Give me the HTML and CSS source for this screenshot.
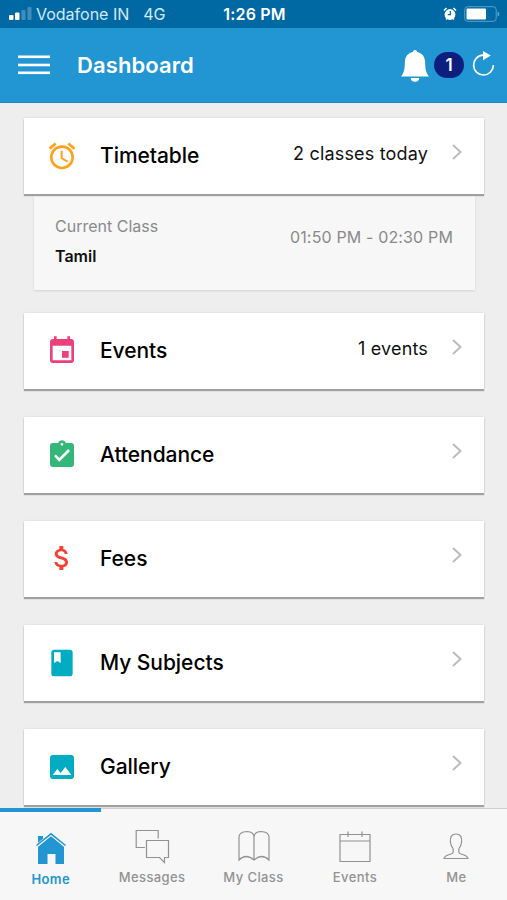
FILE: index.html
```html
<!DOCTYPE html>
<html lang="en">
<head>
    <meta charset="UTF-8">
    <meta name="viewport" content="width=device-width, initial-scale=1.0">
    <title>Dashboard</title>
    <link rel="stylesheet" href="styles.css">
</head>
<body>
    <div class="status-bar">
        <div class="carrier">
            <svg class="signal" width="24" height="14" viewBox="0 0 24 14" fill="#fff">
                <rect x="0" y="8" width="4.5" height="5" rx="1"/>
                <rect x="6" y="5.5" width="4.5" height="7.5" rx="1"/>
                <rect x="12.5" y="3" width="4" height="10" rx="1" opacity=".25"/>
                <rect x="18.500" y="0" width="4" height="13" rx="1" opacity=".25"/>
            </svg>
            <span class="operator">Vodafone IN</span>
            <span class="network">4G</span>
        </div>
        <div class="time">1:26 PM</div>
        <div class="battery">
            <svg width="14" height="14" viewBox="0 0 14 14" fill="none" stroke="#fff">
                <circle cx="7" cy="7.500" r="5.400" fill="#fff" stroke="none"/>
                <path d="M1 3.500L3.500 1M13 3.500L10.500 1M3 12.500l1-1M11 12.500l-1-1" stroke-width="1.500"/>
                <path d="M7.300 4v3.700H4.800" stroke="#0068a3" stroke-width="1.200"/>
            </svg>
            <svg width="36" height="16" viewBox="0 0 36 16">
                <rect x=".7" y=".7" width="31.500" height="14.600" rx="3" fill="none" stroke="#5c9fc9" stroke-width="1"/>
                <rect x="2.500" y="2.500" width="19.500" height="11" rx="1" fill="#fff"/>
                <path d="M33.500 5.500q2 .5 2 2.500t-2 2.500z" fill="#5c9fc9"/>
            </svg>
        </div>
    </div>

    <header class="navbar">
        <svg class="menu" width="32" height="20" viewBox="0 0 32 20" fill="#fff">
            <rect y="0.500" width="32" height="2.600"/>
            <rect y="8.700" width="32" height="2.600"/>
            <rect y="16.500" width="32" height="2.600"/>
        </svg>
        <h1>Dashboard</h1>
        <svg class="bell" width="28" height="32" viewBox="0 0 28 32" fill="#fff">
            <path d="M14 0c1.300 0 2 .8 2.100 2 5 1 7.800 4.500 8 10 .2 6.500.6 10.500 3.900 14.500H0C3.300 22.500 3.700 18.500 3.900 12c.2-5.500 3-9 8-10C12 .8 12.700 0 14 0z"/>
            <path d="M9.800 28h8.400a4.200 3.700 0 0 1-8.400 0z"/>
        </svg>
        <span class="badge">1</span>
        <svg class="refresh" width="23" height="26" viewBox="0 0 23 26">
            <path d="M11 4.200A9.900 9.900 0 1 0 21.400 14" fill="none" stroke="#fff" stroke-width="1.700"/>
            <path d="M11 0l7.800 4.500L11 9.200z" fill="#fff"/>
        </svg>
    </header>

    <main class="content">
        <a class="card">
            <svg class="icon orange" viewBox="0 0 24 24"><path d="M22 5.720l-4.600-3.860-1.290 1.530 4.600 3.860L22 5.720zM7.880 3.390L6.600 1.860 2 5.710l1.290 1.530 4.590-3.850zM12.500 8H11v6l4.750 2.850.75-1.230-4-2.370V8zM12 4c-4.970 0-9 4.030-9 9s4.020 9 9 9c4.970 0 9-4.030 9-9s-4.030-9-9-9zm0 16c-3.870 0-7-3.130-7-7s3.130-7 7-7 7 3.130 7 7-3.130 7-7 7z"/></svg>
            <span class="title">Timetable</span>
            <span class="note">2 classes today</span>
            <svg class="chevron" viewBox="0 0 10 16"><path d="M1 1l7.500 7L1 15"/></svg>
        </a>
        <div class="current">
            <div>
                <div class="label">Current Class</div>
                <div class="subject">Tamil</div>
            </div>
            <div class="hours">01:50 PM - 02:30 PM</div>
        </div>

        <a class="card">
            <svg class="icon pink" viewBox="0 0 24 24"><path d="M17 12h-5v5h5v-5zM16 1v2H8V1H6v2H5c-1.110 0-1.990.9-1.990 2L3 19c0 1.100.89 2 2 2h14c1.100 0 2-.9 2-2V5c0-1.100-.9-2-2-2h-1V1h-2zm3 18H5V8h14v11z"/></svg>
            <span class="title">Events</span>
            <span class="note">1 events</span>
            <svg class="chevron" viewBox="0 0 10 16"><path d="M1 1l7.500 7L1 15"/></svg>
        </a>
        <a class="card">
            <svg class="icon green" viewBox="0 0 24 24"><path d="M19 3h-4.180C14.400 1.840 13.300 1 12 1c-1.300 0-2.400.84-2.820 2H5c-1.100 0-2 .9-2 2v14c0 1.100.9 2 2 2h14c1.100 0 2-.9 2-2V5c0-1.100-.9-2-2-2zm-7 0c.55 0 1 .45 1 1s-.45 1-1 1-1-.45-1-1 .45-1 1-1zm-2 14l-4-4 1.410-1.410L10 14.170l6.590-6.590L18 9l-8 8z"/></svg>
            <span class="title">Attendance</span>
            <svg class="chevron" viewBox="0 0 10 16"><path d="M1 1l7.500 7L1 15"/></svg>
        </a>
        <a class="card">
            <svg class="icon fees red" viewBox="0 0 24 24"><path d="M11.800 10.900c-2.270-.59-3-1.200-3-2.150 0-1.090 1.010-1.850 2.700-1.850 1.780 0 2.440.85 2.500 2.100h2.210c-.07-1.720-1.120-3.300-3.210-3.810V3h-3v2.160c-1.940.42-3.500 1.680-3.500 3.610 0 2.310 1.910 3.460 4.700 4.130 2.500.6 3 1.480 3 2.410 0 .69-.49 1.790-2.700 1.790-2.060 0-2.870-.92-2.980-2.100h-2.200c.12 2.190 1.760 3.420 3.680 3.830V21h3v-2.150c1.950-.37 3.500-1.500 3.500-3.550 0-2.840-2.430-3.810-4.700-4.400z"/></svg>
            <span class="title">Fees</span>
            <svg class="chevron" viewBox="0 0 10 16"><path d="M1 1l7.500 7L1 15"/></svg>
        </a>
        <a class="card">
            <svg class="icon teal" viewBox="0 0 24 24"><path d="M18 2H6c-1.100 0-2 .9-2 2v16c0 1.100.9 2 2 2h12c1.100 0 2-.9 2-2V4c0-1.100-.9-2-2-2zM6 4h5v8l-2.500-1.500L6 12V4z"/></svg>
            <span class="title">My Subjects</span>
            <svg class="chevron" viewBox="0 0 10 16"><path d="M1 1l7.500 7L1 15"/></svg>
        </a>
        <a class="card">
            <svg class="icon teal" viewBox="0 0 24 24"><path d="M21 19V5c0-1.100-.9-2-2-2H5c-1.100 0-2 .9-2 2v14c0 1.100.9 2 2 2h14c1.100 0 2-.9 2-2zM5 18l3.500-4.500 2.500 3.010L14.500 12l4.500 6H5z"/></svg>
            <span class="title">Gallery</span>
            <svg class="chevron" viewBox="0 0 10 16"><path d="M1 1l7.500 7L1 15"/></svg>
        </a>
    </main>

    <nav class="tabs">
        <a class="tab active">
            <svg width="36" height="36" viewBox="0 0 36 36">
                <path d="M5 15.500L18 5l13 10.500V33h-8.500V23h-8v10H5z" fill="#2196d3"/>
                <path d="M5 13V5h5v4z" fill="#2196d3"/>
                <path d="M3.500 15L18 3.200 32.500 15" fill="none" stroke="#f7f7f7" stroke-width="3"/>
                <path d="M3.500 14.500L18 2.800l14.500 11.700" fill="none" stroke="#2196d3" stroke-width="1.500"/>
            </svg>
            <span>Home</span>
        </a>
        <a class="tab">
            <svg width="36" height="36" viewBox="0 0 36 36">
                <path d="M11 18.500H2.200V1.500h22v8M12.500 11.500h22v17h-4v5l-5-5h-13z"/>
            </svg>
            <span>Messages</span>
        </a>
        <a class="tab">
            <svg width="36" height="36" viewBox="0 0 36 36">
                <path d="M18 31V8q0-5-7-5.500Q3 3 3 8v23q7-7 15 0 8-7 15 0V8q0-5-8-5.500-7 .5-7 5.500"/>
            </svg>
            <span>My Class</span>
        </a>
        <a class="tab">
            <svg width="36" height="36" viewBox="0 0 36 36">
                <path d="M3 5.500h30v27H3zM3 12h30M11 2.500V8M25 2.500V8"/>
            </svg>
            <span>Events</span>
        </a>
        <a class="tab">
            <svg width="36" height="36" viewBox="0 0 36 36">
                <path d="M18 5c-4.500 0-6 3-5.600 8 .3 3 1 4.500 2.600 6.500.5 3.500.5 4.500-1.500 5.300-4 1.400-6.500 1.500-7.500 4.700h24c-1-3.200-3.500-3.300-7.500-4.700-2-.8-2-1.800-1.500-5.300 1.600-2 2.300-3.500 2.600-6.500.4-5-1.100-8-5.600-8z"/>
            </svg>
            <span>Me</span>
        </a>
    </nav>
</body>
</html>
```

FILE: styles.css
```css
* {
    box-sizing: border-box;
}
body {
    margin: 0;
    height: 900px;
    display: flex;
    flex-direction: column;
    overflow: hidden;
    background-color: #eeeeee;
    font-family: Inter, "Liberation Sans", sans-serif;
    color: #111;
}

/* Status bar */
.status-bar {
    flex: none;
    height: 28px;
    display: grid;
    grid-template-columns: 1fr auto 1fr;
    align-items: center;
    padding: 0 7px 0 9px;
    background-color: #0068a3;
    color: #fff;
    font-size: 16px;
}
.carrier {
    display: flex;
    align-items: center;
    color: #d3e8f5;
}
.operator {
    margin-left: 3px;
}
.network {
    margin-left: 14px;
}
.time {
    font-weight: 600;
    letter-spacing: 0.2px;
}
.battery {
    display: flex;
    align-items: center;
    justify-content: flex-end;
    gap: 7px;
}

/* Header */
.navbar {
    flex: none;
    height: 75px;
    display: flex;
    align-items: center;
    padding: 0 12px 0 18px;
    background-color: #2196d3;
    border-bottom: 1px solid #1c8bc5;
    color: #fff;
}
.navbar h1 {
    flex: 1;
    margin: 0 0 0 27px;
    font-size: 22px;
    font-weight: 600;
    letter-spacing: 0.1px;
}
.bell {
    margin-top: 2px;
}
.badge {
    width: 30px;
    height: 26px;
    margin: 0 8px 0 5px;
    border-radius: 13px;
    background-color: #0c1f7f;
    font-size: 17px;
    font-weight: 600;
    line-height: 26px;
    text-align: center;
}
.refresh {
    margin-bottom: 3px;
}

/* Cards */
.content {
    flex: 1;
    min-height: 0;
    overflow: hidden;
    padding: 15px 23px 0 24px;
}
.card {
    height: 76px;
    margin-bottom: 28px;
    display: flex;
    align-items: center;
    padding: 0 22px;
    background-color: #fff;
    box-shadow: 0 2px 1px #a0a0a0, 0 0 2px rgba(0, 0, 0, 0.12);
    position: relative;
}
.icon {
    width: 32px;
    height: 32px;
}
.fees {
    margin: 0 0 2px;
}
.orange { fill: #ff9f1a; }
.pink { fill: #ec407a; }
.green { fill: #35b779; }
.red { fill: #f44336; }
.teal { fill: #00acc1; }
.title {
    flex: 1;
    margin: 0 0 2px 22px;
    font-size: 21px;
    font-weight: 500;
    letter-spacing: -0.05px;
    color: #000;
}
.note {
    margin-bottom: 5px;
    font-size: 18px;
    letter-spacing: 0.17px;
}
.chevron {
    width: 10px;
    height: 16px;
    margin: 0 0 9px 24px;
    fill: none;
    stroke: #bdbdbd;
    stroke-width: 2;
}
.current {
    height: 94px;
    margin: -26px 9px 23px 10px;
    display: flex;
    justify-content: space-between;
    padding: 20px 22px 0 21px;
    background-color: #f7f7f7;
    box-shadow: 0 1px 2px rgba(0, 0, 0, 0.12);
}
.label, .hours {
    font-size: 16px;
    line-height: 20px;
    color: #8a8a8a;
}
.subject {
    margin-top: 10px;
    font-size: 16px;
    font-weight: 600;
    line-height: 20px;
}
.hours {
    margin-top: 11px;
    letter-spacing: 0.15px;
}

/* Bottom tabs */
.tabs {
    flex: none;
    height: 92px;
    display: flex;
    background-color: #f7f7f7;
    border-top: 1px solid #cfcfcf;
    position: relative;
}
.tab {
    flex: 1;
    display: flex;
    flex-direction: column;
    align-items: center;
    padding-top: 20px;
    font-size: 13px;
    font-weight: 500;
    letter-spacing: 0.4px;
    color: #929292;
}
.tab svg {
    fill: none;
    stroke: #929292;
    stroke-width: 1.2;
}
.tab span {
    margin-top: 4px;
}
.active {
    margin-top: -1px;
    padding-top: 19px;
    border-top: 4px solid #2196d3;
    font-weight: 600;
    color: #2196d3;
}
.active svg {
    stroke: none;
}
```
